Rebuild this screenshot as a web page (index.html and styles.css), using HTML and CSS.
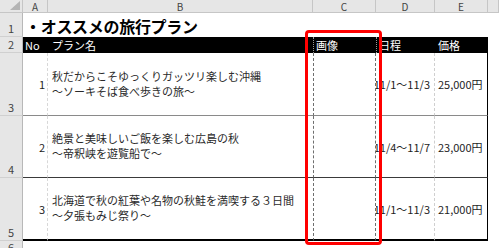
FILE: index.html
```html
<!DOCTYPE html>
<html lang="ja">
<head>
    <meta charset="UTF-8">
    <title>オススメの旅行プラン</title>
    <link rel="stylesheet" href="styles.css">
</head>
<body>
    <div class="sheet">
        <!-- column headers -->
        <div class="corner">
            <svg width="12" height="10" viewBox="0 0 12 10"><polygon points="11,0 11,9 1,9" fill="#b4b4b4"/></svg>
        </div>
        <div class="colhead">A</div>
        <div class="colhead">B</div>
        <div class="colhead">C</div>
        <div class="colhead">D</div>
        <div class="colhead">E</div>
        <div class="colhead"></div>

        <!-- row 1 -->
        <div class="rowhead">1</div>
        <div class="title">・オススメの旅行プラン</div>
        <div class="cell"></div>

        <!-- row 2 -->
        <div class="rowhead">2</div>
        <div class="th">No</div>
        <div class="th th-b">プラン名</div>
        <div class="th th-c">画像</div>
        <div class="th th-d">日程</div>
        <div class="th th-e">価格</div>
        <div class="cell"></div>

        <!-- row 3 -->
        <div class="rowhead">3</div>
        <div class="td no line-gray">1</div>
        <div class="td plan line-gray">
            <span>秋だからこそゆっくりガッツリ楽しむ沖縄</span>
            <span>～ソーキそば食べ歩きの旅～</span>
        </div>
        <div class="td img line-gray"></div>
        <div class="td date line-gray">11/1～11/3</div>
        <div class="td price line-gray">25,000円</div>
        <div class="cell"></div>

        <!-- row 4 -->
        <div class="rowhead">4</div>
        <div class="td no line-dark">2</div>
        <div class="td plan line-dark">
            <span>絶景と美味しいご飯を楽しむ広島の秋</span>
            <span>～帝釈峡を遊覧船で～</span>
        </div>
        <div class="td img line-dark"></div>
        <div class="td date line-dark">11/4～11/7</div>
        <div class="td price line-dark">23,000円</div>
        <div class="cell"></div>

        <!-- row 5 -->
        <div class="rowhead">5</div>
        <div class="td no line-end">3</div>
        <div class="td plan line-end">
            <span>北海道で秋の紅葉や名物の秋鮭を満喫する３日間</span>
            <span>～夕張もみじ祭り～</span>
        </div>
        <div class="td img line-end"></div>
        <div class="td date line-end">11/1～11/3</div>
        <div class="td price line-end">21,000円</div>
        <div class="cell"></div>

        <!-- row 6 (cut by the window) -->
        <div class="rowhead last">6</div>
    </div>

    <div class="callout"></div>
</body>
</html>
```

FILE: styles.css
```css
/* Page */
body {
    margin: 0;
    background: #fff;
    font-family: "Noto Sans CJK JP", "Noto Sans", sans-serif;
    color: #1e1e1e;
    position: relative;
    width: 499px;
    height: 248px;
    overflow: hidden;
}

/* Sheet grid */
.sheet {
    display: grid;
    grid-template-columns: 23px 25px 265px 63px 59px 53px 11px;
    grid-template-rows: 13px 24px 16px 63px 62px 63px 7px;
}

.corner,
.colhead,
.rowhead {
    background-color: #e6e6e6;
    color: #444;
    font-size: 10px;
    line-height: 11px;
    box-sizing: border-box;
    border-right: 1px solid #c6c6c6;
    border-bottom: 1px solid #c6c6c6;
}

.corner {
    display: flex;
    align-items: flex-end;
    justify-content: flex-end;
    padding: 0 1px 1px 0;
}

.colhead {
    display: flex;
    align-items: center;
    justify-content: center;
}

.rowhead {
    grid-column: 1;
    display: flex;
    align-items: flex-end;
    justify-content: center;
    padding-bottom: 2px;
    font-size: 11px;
    border-right-color: #b8b8b8;
    border-bottom-color: #d0d0d0;
}

.rowhead.last {
    align-items: flex-start;
    padding: 1px 0 0;
    border-bottom: none;
}

.cell {
    background: #fff;
}

/* Title row */
.title {
    grid-column: 2 / 7;
    display: flex;
    align-items: center;
    padding-left: 2px;
    padding-top: 1px;
    font-size: 16px;
    font-weight: bold;
    color: #000;
    letter-spacing: -0.3px;
}

/* Header row */
.th {
    background-color: #000;
    color: #fff;
    font-size: 11px;
    display: flex;
    align-items: center;
    padding-left: 2px;
    box-sizing: border-box;
}

.th-b {
    padding-left: 4px;
}

.th-c,
.th-d {
    border-left: 1px dotted #9a9a9a;
}

.th-e {
    padding-left: 3px;
}

/* Body rows */
.td {
    box-sizing: border-box;
    font-size: 11px;
    display: flex;
    align-items: center;
    overflow: hidden;
    white-space: nowrap;
    background: #fff;
}

.no {
    justify-content: flex-end;
    padding-right: 2px;
    border-right: 1px dashed #d8d8d8;
}

.plan {
    flex-direction: column;
    align-items: flex-start;
    justify-content: center;
    padding-left: 4px;
    line-height: 15px;
    padding-bottom: 1px;
    color: #2a2a2a;
}

.img {
    border-left: 1px dashed #6e6e6e;
    border-right: 1px dashed #6e6e6e;
}

.date {
    justify-content: flex-end;
    padding-right: 4px;
    border-right: 1px dashed #cfcfcf;
}

.price {
    padding-left: 3px;
    border-right: 1px solid #000;
}

.line-gray {
    border-bottom: 1px solid #8a8a8a;
}

.line-dark {
    border-bottom: 1px solid #3a3a3a;
}

.line-end {
    border-bottom: 2px solid #000;
}

/* Red highlight frame over column C */
.callout {
    position: absolute;
    left: 305px;
    top: 30px;
    width: 77px;
    height: 215px;
    box-sizing: border-box;
    border: 3px solid #f00;
    border-radius: 4px;
}
```
